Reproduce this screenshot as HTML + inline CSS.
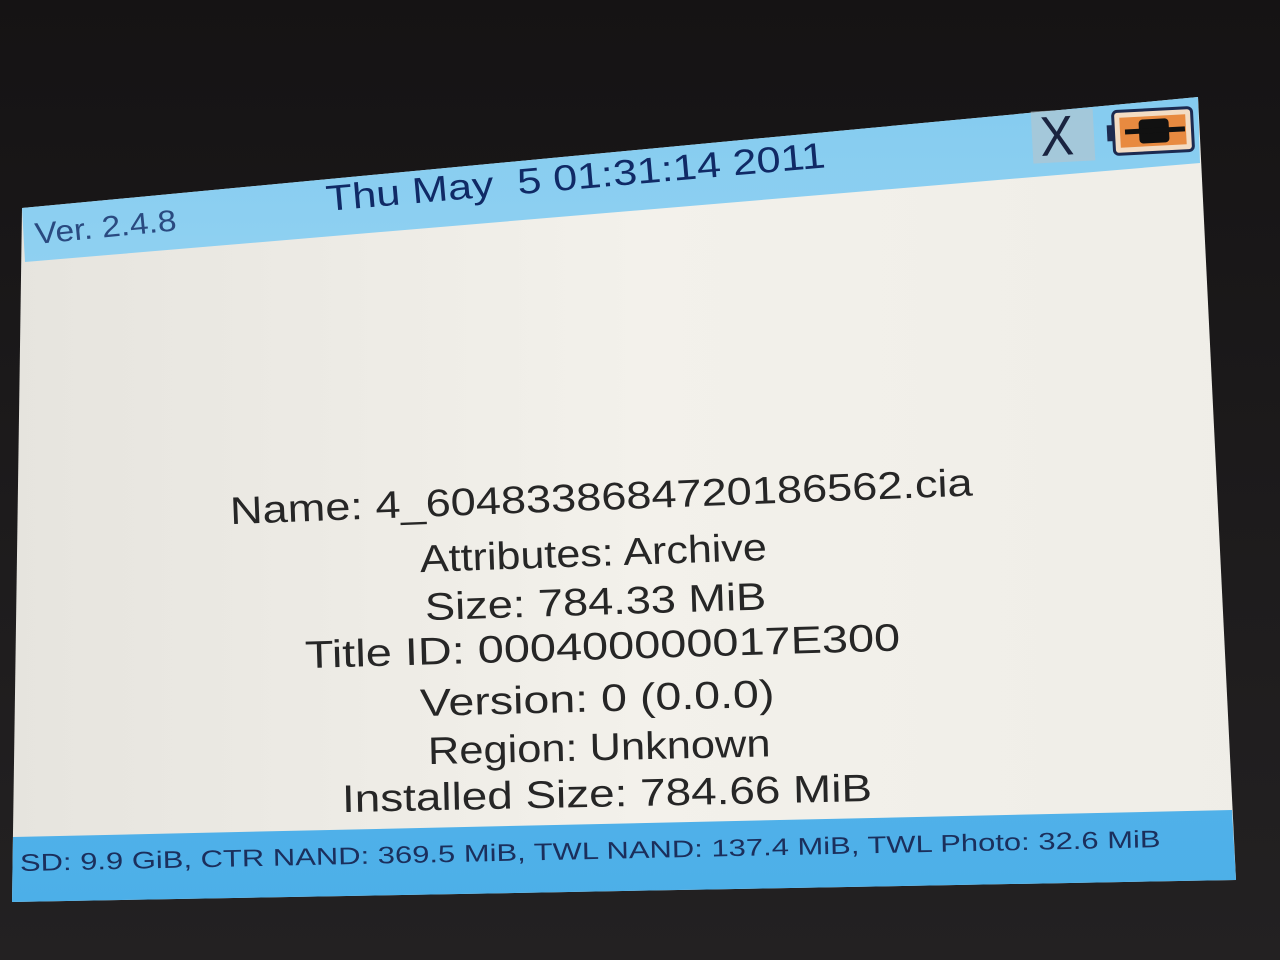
<!DOCTYPE html>
<html><head><meta charset="utf-8"><style>
html,body{margin:0;padding:0}
body{width:1280px;height:960px;overflow:hidden;position:relative;background:#1a1819;font-family:"Liberation Sans",sans-serif}
.bez{position:absolute;left:0;top:0;width:1280px;height:960px;background:linear-gradient(#151314 0,#1e1c1d 60%,#232122 100%)}
.scr{position:absolute;left:0;top:0;width:1280px;height:960px;clip-path:polygon(22px 208px,1198px 97px,1236px 880px,12px 902px);background:linear-gradient(90deg,#e6e4de,#f3f1eb 50%,#efede7)}
.hdr{position:absolute;left:0;top:0;width:1280px;height:960px;clip-path:polygon(22px 208px,1198px 97px,1200px 163px,25px 262px);background:linear-gradient(#7fc9ef,#a8dcf5 70%,#c9e9f7)}
.ftr{position:absolute;left:0;top:0;width:1280px;height:960px;clip-path:polygon(13px 837px,1232px 810px,1236px 880px,12px 902px);background:linear-gradient(#6fc0ee,#4aaee8)}
.t{position:absolute;white-space:nowrap;color:#262626;transform-origin:left center}
.m{font-size:35px}
.hd{color:#102a66}
</style></head><body>
<div class="bez"></div>
<div class="scr"></div>
<div class="hdr"></div>
<div class="ftr"></div>
<div class="t hd" style="left:35px;top:218px;font-size:30px;transform:rotate(-5.5deg) scaleX(1.12);color:#2a4a80">Ver. 2.4.8</div>
<div class="t hd" style="left:326px;top:178px;font-size:36px;transform:rotate(-5deg) scaleX(1.2)">Thu May&nbsp; 5 01:31:14 2011</div>
<div style="position:absolute;left:1032px;top:110px;width:62px;height:52px;background:#b8c4cc;opacity:.6;transform:rotate(-3deg)"></div>
<div class="t" style="left:1040px;top:104px;font-size:56px;transform:rotate(-3deg) scaleX(.9);color:#1a2440">X</div>
<div style="position:absolute;left:1112px;top:108px;width:76px;height:40px;border:3px solid #1c2a50;border-radius:6px;background:#f3dcc4;transform:rotate(-3deg)">
<div style="position:absolute;left:5px;top:5px;width:66px;height:30px;background:#e88a40"></div>
<div style="position:absolute;left:24px;top:8px;width:30px;height:24px;background:#111;border-radius:4px"></div>
<div style="position:absolute;left:10px;top:17px;width:60px;height:5px;background:#111"></div>
<div style="position:absolute;left:-8px;top:12px;width:6px;height:16px;background:#1c2a50"></div></div>
<div class="t m" style="left:230px;top:492px;transform:rotate(-2.2deg) scale(1.29,1.1)">Name: 4_604833868472018​6562.cia</div>
<div class="t m" style="left:420px;top:540px;transform:rotate(-2deg) scale(1.23,1.1)">Attributes: Archive</div>
<div class="t m" style="left:425px;top:588px;transform:rotate(-1.8deg) scale(1.29,1.1)">Size: 784.33 MiB</div>
<div class="t m" style="left:305px;top:636px;transform:rotate(-1.7deg) scale(1.34,1.1)">Title ID: 000400000017E300</div>
<div class="t m" style="left:420px;top:684px;transform:rotate(-1.5deg) scale(1.33,1.1)">Version: 0 (0.0.0)</div>
<div class="t m" style="left:428px;top:732px;transform:rotate(-1.3deg) scale(1.24,1.1)">Region: Unknown</div>
<div class="t m" style="left:342px;top:780px;transform:rotate(-1.2deg) scale(1.31,1.1)">Installed Size: 784.66 MiB</div>
<div class="t hd" style="left:20px;top:850px;font-size:24px;transform:rotate(-1.2deg) scaleX(1.29);color:#1b2f5c">SD: 9.9 GiB, CTR NAND: 369.5 MiB, TWL NAND: 137.4 MiB, TWL Photo: 32.6 MiB</div>
</body></html>
